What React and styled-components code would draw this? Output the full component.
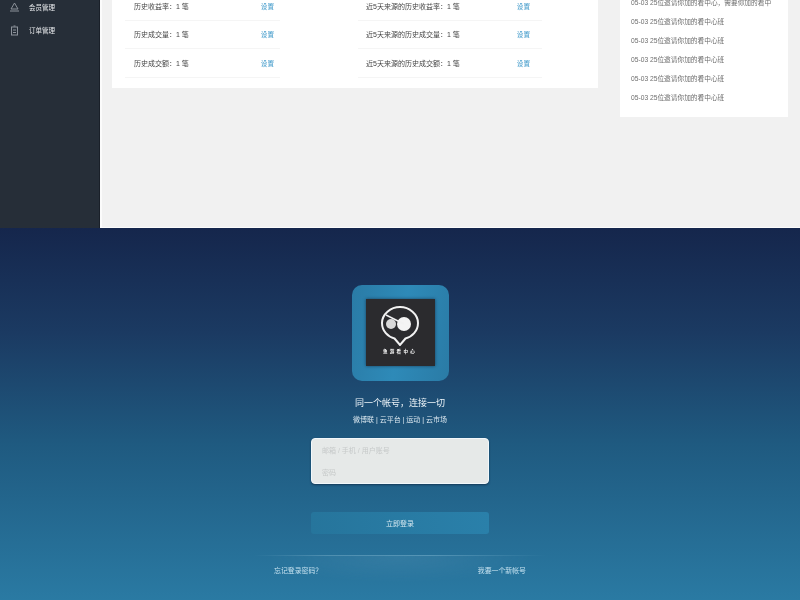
import React from "react";
import styled, { createGlobalStyle } from "styled-components";

const Global = createGlobalStyle`
  html, body { margin: 0; padding: 0; background: #1b3157; }
  body { font-family: "Liberation Sans", "Noto Sans CJK SC", sans-serif; }
  * { box-sizing: border-box; }
`;

const Page = styled.div`
  width: 800px;
  height: 600px;
  overflow: hidden;
  display: flex;
  flex-direction: column;
`;

const Dashboard = styled.section`
  height: 228px;
  flex: none;
  display: flex;
  overflow: hidden;
  background: #f1f1f1;
`;

const Sidebar = styled.nav`
  width: 100px;
  flex: none;
  background: #262e38;
  display: flex;
  flex-direction: column;
  gap: 9px;
  padding: 0 0 0 9px;
  border-right: 1px solid #1a2029;
`;

const NavItem = styled.div`
  height: 14px;
  display: flex;
  align-items: center;
  gap: 9px;
  color: #e9ebee;
  font-size: 6.5px;
  filter: blur(0.6px);
`;

const Main = styled.main`
  flex: 1;
  display: flex;
  align-items: flex-start;
  padding-left: 12px;
  border-left: 2px solid #fbfbfb;
  border-bottom: 1px solid #fbfbfb;
`;

const StatsCard = styled.div`
  width: 486px;
  height: 96px;
  margin-top: -8px;
  margin-left: -2px;
  background: #fff;
  display: grid;
  grid-template-columns: 155px 184px;
  column-gap: 78px;
  padding-left: 13px;
`;

const StatColumn = styled.div`
  display: flex;
  flex-direction: column;
`;

const StatRow = styled.div`
  height: 28.5px;
  display: flex;
  align-items: center;
  justify-content: space-between;
  padding: 0 ${(p) => p.$wide ? "12px" : "6px"} 0 ${(p) => p.$wide ? "8px" : "9px"};
  border-bottom: 1px solid #f5f5f5;
`;

const StatLabel = styled.span`
  color: #444;
  font-size: 7px;
  white-space: nowrap;
  filter: blur(0.6px);
`;

const StatLink = styled.span`
  color: #3b97c9;
  font-size: 6.6px;
  filter: blur(0.55px);
`;

const NoticeCard = styled.aside`
  width: 168px;
  height: 125px;
  margin: -8px 0 0 22px;
  padding: 0 0 0 11px;
  background: #fff;
  display: flex;
  flex-direction: column;
`;

const Notice = styled.div`
  height: 19px;
  padding-top: 6px;
  line-height: 9px;
  color: #6d6d6d;
  font-size: 6.7px;
  white-space: nowrap;
  filter: blur(0.6px);
`;

const Login = styled.section`
  flex: 1;
  display: flex;
  flex-direction: column;
  align-items: center;
  background: linear-gradient(180deg, #15264c 0%, #1b3a62 28%, #1f5a80 58%, #2a7aa3 100%);
`;

const LogoTile = styled.div`
  width: 97px;
  height: 96px;
  margin-top: 57px;
  border-radius: 10px;
  background: linear-gradient(100deg, #2a7ba6 0%, #2e8ab8 50%, #2a7ba6 100%);
  display: flex;
  align-items: center;
  justify-content: center;
  padding-bottom: 2px;
`;

const LogoBadge = styled.div`
  width: 69px;
  height: 67px;
  background: #2b2b2e;
  box-shadow: 0 0 3px rgba(10, 20, 40, 0.6);
  display: flex;
  flex-direction: column;
  align-items: center;
  padding-top: 7px;
`;

const LogoCaption = styled.div`
  color: #fff;
  font-size: 4.5px;
  line-height: 6px;
  font-weight: 700;
  letter-spacing: 2.3px;
  margin-top: 3px;
  filter: blur(0.35px);
`;

const Heading = styled.h1`
  margin: 16px 0 0;
  color: #eef5f9;
  font-size: 9px;
  line-height: 12px;
  font-weight: 400;
  filter: blur(0.55px);
`;

const Products = styled.div`
  margin-top: 6px;
  color: #dbe8f0;
  font-size: 7px;
  line-height: 10px;
  filter: blur(0.55px);
`;

const InputBox = styled.div`
  width: 178px;
  height: 46px;
  margin-top: 13px;
  background: #e6e9e8;
  border: 1.5px solid #f2f8fb;
  border-radius: 4px;
  box-shadow: 0 1px 2px rgba(12, 30, 55, 0.6);
  display: flex;
  flex-direction: column;
`;

const Field = styled.div`
  flex: 1;
  padding-left: 10px;
  display: flex;
  align-items: center;
  color: #c6c9c9;
  font-size: 7px;
  filter: blur(0.55px);
`;

const Submit = styled.button`
  width: 178px;
  height: 22px;
  margin-top: 28px;
  border: 0;
  border-radius: 3px;
  background: linear-gradient(90deg, #26759c, #2a80aa);
  font: inherit;
  padding: 0;
  color: #d5e8f1;
  font-size: 7px;
  display: flex;
  align-items: center;
  justify-content: center;
`;

const SubmitLabel = styled.span`
  filter: blur(0.5px);
`;

const Foot = styled.footer`
  width: 290px;
  margin-top: 21px;
  height: 45px;
  padding: 10px 19px 0;
  border-top: 1px solid transparent;
  border-image: linear-gradient(90deg, transparent, #4f8fb0 25%, #5595b6 60%, transparent) 1;
  background: radial-gradient(ellipse 130px 26px at 50% 0, rgba(120, 175, 205, 0.16), transparent);
  display: flex;
  justify-content: space-between;
  align-items: flex-start;
`;

const FootLink = styled.span`
  color: #c6e2f0;
  font-size: 6.9px;
  line-height: 9px;
  filter: blur(0.55px);
`;

const stats = ["历史收益率：1 笔", "历史成交量：1 笔", "历史成交额：1 笔"];
const recent = ["近5天来源的历史收益率：1 笔", "近5天来源的历史成交量：1 笔", "近5天来源的历史成交额：1 笔"];
const notices = [
  "05-03 25位邀请你加的看中心，需要你加的看中",
  "05-03 25位邀请你加的看中心班",
  "05-03 25位邀请你加的看中心班",
  "05-03 25位邀请你加的看中心班",
  "05-03 25位邀请你加的看中心班",
  "05-03 25位邀请你加的看中心班",
];

const MemberIcon = () => (
  <svg width="11" height="10" viewBox="0 0 11 10" fill="none" stroke="#8d939b" strokeWidth="1">
    <path d="M5.5 1 9 7H2Z" />
    <path d="M1 9h9" />
  </svg>
);

const OrderIcon = () => (
  <svg width="11" height="11" viewBox="0 0 11 11" fill="none" stroke="#8d939b" strokeWidth="1">
    <rect x="2.500" y="2" width="6" height="8" />
    <path d="M4.500 1h2M4 5h3M4 7.500h3" />
  </svg>
);

const LogoMark = () => (
  <svg width="40" height="40" viewBox="0 0 40 40" fill="none">
    <path
      d="M20 1C10.600 1 2 8.300 2 17c0 8 6 14 12.500 15.500L20 39l5.500-6.500C32 31 38 25 38 17 38 8.300 29.400 1 20 1Z"
      stroke="#f2f2f2"
      strokeWidth="2"
    />
    <circle cx="24" cy="18" r="7" fill="#f4f4f4" />
    <circle cx="11" cy="18" r="5" fill="#d9d9d9" />
    <path d="M6 9 24 18" stroke="#f2f2f2" strokeWidth="1.500" />
  </svg>
);

export default function App() {
  return (
    <Page>
      <Global />
      <Dashboard>
        <Sidebar>
          <NavItem><MemberIcon />会员管理</NavItem>
          <NavItem><OrderIcon />订单管理</NavItem>
        </Sidebar>
        <Main>
          <StatsCard>
            <StatColumn>
              {stats.map((s) => (
                <StatRow key={s}><StatLabel>{s}</StatLabel><StatLink>设置</StatLink></StatRow>
              ))}
            </StatColumn>
            <StatColumn>
              {recent.map((s) => (
                <StatRow key={s} $wide><StatLabel>{s}</StatLabel><StatLink>设置</StatLink></StatRow>
              ))}
            </StatColumn>
          </StatsCard>
          <NoticeCard>
            {notices.map((n, i) => (
              <Notice key={i}>{n}</Notice>
            ))}
          </NoticeCard>
        </Main>
      </Dashboard>
      <Login>
        <LogoTile>
          <LogoBadge>
            <LogoMark />
            <LogoCaption>鱼游看中心</LogoCaption>
          </LogoBadge>
        </LogoTile>
        <Heading>同一个帐号，连接一切</Heading>
        <Products>微博联 | 云平台 | 运动 | 云市场</Products>
        <InputBox>
          <Field>邮箱 / 手机 / 用户账号</Field>
          <Field>密码</Field>
        </InputBox>
        <Submit><SubmitLabel>立即登录</SubmitLabel></Submit>
        <Foot>
          <FootLink>忘记登录密码？</FootLink>
          <FootLink>我要一个新帐号</FootLink>
        </Foot>
      </Login>
    </Page>
  );
}
